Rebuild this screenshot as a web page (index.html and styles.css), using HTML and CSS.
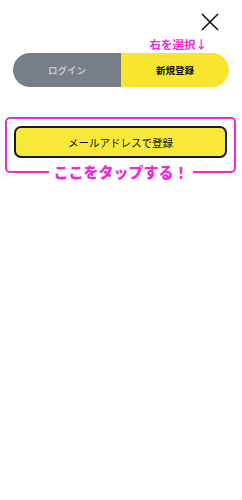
FILE: index.html
```html
<!DOCTYPE html>
<html lang="ja">
<head>
<meta charset="utf-8">
<link rel="stylesheet" href="styles.css">
</head>
<body>
<div class="page">
  <div class="top">
    <svg class="close" width="18" height="18" viewBox="0 0 18 18"><path d="M1 1 L17 17 M17 1 L1 17" stroke="#111" stroke-width="1.6" fill="none"/></svg>
  </div>
  <div class="hint">右を選択↓</div>
  <div class="toggle">
    <div class="tab tab-login">ログイン</div>
    <div class="tab tab-signup">新規登録</div>
  </div>
  <div class="callout">
    <div class="mail-btn">メールアドレスで登録</div>
  </div>
  <div class="tap-label">ここをタップする！</div>
</div>
</body>
</html>
```
FILE: styles.css
```css
html, body { margin: 0; padding: 0; background: #fff; }
body { font-family: "Noto Sans CJK JP", "Noto Sans", sans-serif; }
.page { width: 242px; min-height: 500px; }
.top { display: flex; justify-content: flex-end; padding: 13px 23px 0 0; height: 20px; }
.close { display: block; }
.hint { text-align: right; padding-right: 35px; margin-top: 3px; height: 17px; font-size: 11.5px; font-weight: 700; line-height: 17px; color: #ee2ad6; }
.toggle { display: flex; margin: 0 13px; height: 34px; border-radius: 17px; overflow: hidden; }
.tab { flex: 1; display: flex; align-items: center; justify-content: center; font-size: 9.5px; font-weight: 700; }
.tab-login { background: #777e85; color: #c4c8cc; }
.tab-signup { background: #f8e52f; color: #111; }
.callout { margin: 30px 6px 0 5px; border: 2px solid #ee2ad6; border-radius: 5px; padding: 7px 7px 13px 7px; }
.mail-btn { height: 32px; box-sizing: border-box; border: 2px solid #1a1a1a; border-radius: 7px; background: #f8e83a; display: flex; align-items: center; justify-content: center; font-size: 10.5px; color: #111; }
.tap-label { width: fit-content; margin: -11px auto 0; padding: 0 4px; background: #fff; position: relative; font-size: 15px; font-weight: 900; line-height: 20px; color: #ee2ad6; white-space: nowrap; }
```
